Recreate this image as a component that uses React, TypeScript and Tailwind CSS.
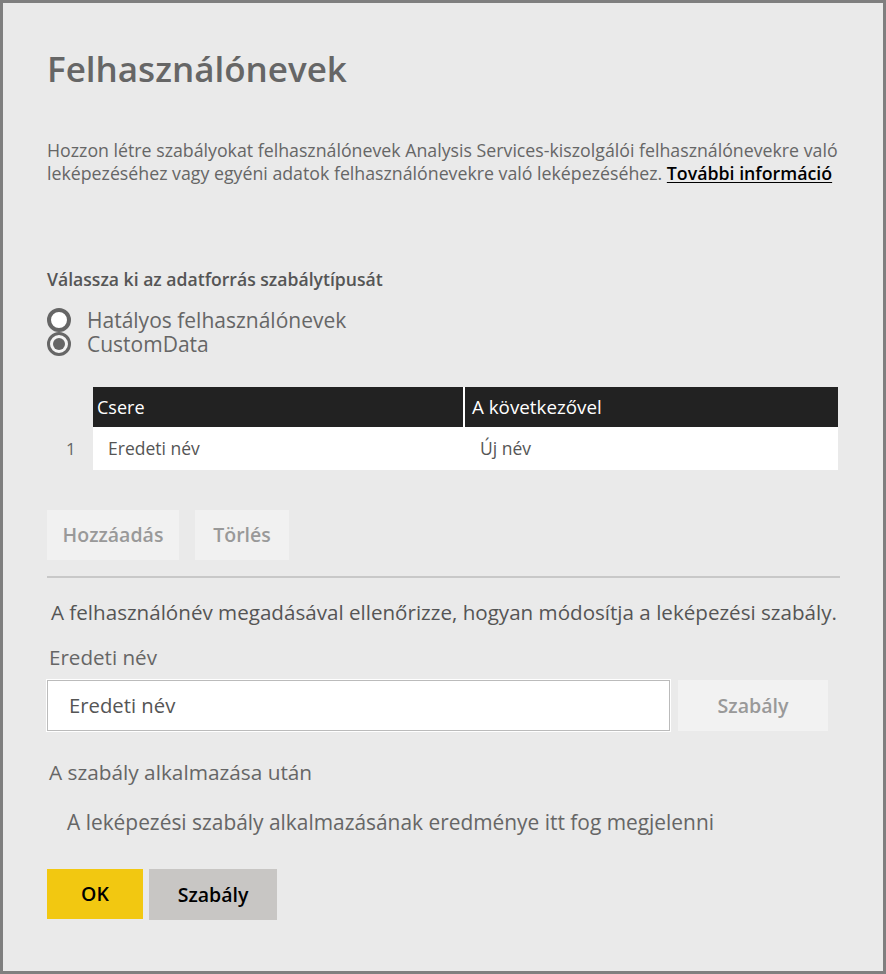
export default function App() {
  return (
    <div className="w-[886px] h-[974px] border-[3px] border-[#7f7f7f] bg-[#eaeaea] font-['Open_Sans',sans-serif] text-[#666]">
      <div className="pl-[44px] pr-[40px] pt-[42px]">
        <h1 className="text-[35px] font-semibold leading-[48px] text-[#666]">Felhasználónevek</h1>

        <p className="mt-[46px] text-[17.75px] leading-[23px] text-[#666] whitespace-nowrap">
          <span className="block">Hozzon létre szabályokat felhasználónevek Analysis Services-kiszolgálói felhasználónevekre való</span>
          <span className="block">
            leképezéséhez vagy egyéni adatok felhasználónevekre való leképezéséhez.{' '}
            <a href="#" className="font-semibold text-black underline underline-offset-2">További információ</a>
          </span>
        </p>

        <div className="mt-[82px] text-[17.6px] font-semibold text-[#555] leading-[24px]">Válassza ki az adatforrás szabálytípusát</div>

        <div className="mt-[17px] flex flex-col">
          <label className="flex items-center gap-[16px] h-[24px]">
            <span className="w-[24px] h-[24px] rounded-full border-[4px] border-[#666] bg-white" />
            <span className="text-[21px] leading-[24px] text-[#666]">Hatályos felhasználónevek</span>
          </label>
          <label className="flex items-center gap-[16px] h-[24px]">
            <span className="w-[24px] h-[24px] rounded-full border-[3px] border-[#666] bg-[#f4f4f4] flex items-center justify-center">
              <span className="w-[12px] h-[12px] rounded-full bg-[#666]" />
            </span>
            <span className="text-[21px] leading-[24px] text-[#666]">CustomData</span>
          </label>
        </div>

        <div className="mt-[31px] flex">
          <div className="w-[46px] flex flex-col">
            <div className="h-[40px]" />
            <div className="h-[43px] flex items-center pl-[19px] text-[17px] text-[#666]">1</div>
          </div>
          <div className="w-[745px]">
            <div className="flex h-[40px] bg-[#222] text-white text-[18px]">
              <div className="w-[372px] flex items-center pl-[4px] border-r-2 border-white">Csere</div>
              <div className="flex-1 flex items-center pl-[7px] text-[18.8px]">A következővel</div>
            </div>
            <div className="flex h-[43px] bg-white text-[17.5px] text-[#555]">
              <div className="w-[372px] flex items-center pl-[15px]">Eredeti név</div>
              <div className="flex-1 flex items-center pl-[15px]">Új név</div>
            </div>
          </div>
        </div>

        <div className="mt-[40px] flex gap-[16px]">
          <button className="h-[50px] w-[132px] bg-[#f1f1f1] text-[19.5px] font-semibold text-[#999]">Hozzáadás</button>
          <button className="h-[50px] w-[94px] bg-[#f1f1f1] text-[19.5px] font-semibold text-[#999]">Törlés</button>
        </div>

        <div className="mt-[16px] h-[2px] bg-[#c8c8c8] w-[793px]" />

        <div className="mt-[20px] pl-[4px] text-[20.6px] leading-[28px] text-[#555]">A felhasználónév megadásával ellenőrizze, hogyan módosítja a leképezési szabály.</div>

        <div className="mt-[17px] pl-[2px] text-[20.6px] leading-[28px] text-[#666]">Eredeti név</div>

        <div className="mt-[9px] flex gap-[8px]">
          <div className="w-[623px] h-[51px] bg-white border border-[#bbb] ring-1 ring-white flex items-center pl-[21px] text-[20.3px] text-[#555]">Eredeti név</div>
          <button className="w-[150px] h-[51px] bg-[#f2f2f2] text-[19.6px] font-semibold text-[#999]">Szabály</button>
        </div>

        <div className="mt-[27px] pl-[2px] text-[20.8px] leading-[28px] text-[#666]">A szabály alkalmazása után</div>

        <div className="mt-[22px] pl-[20px] text-[20.9px] leading-[28px] text-[#666]">A leképezési szabály alkalmazásának eredménye itt fog megjelenni</div>

        <div className="mt-[33px] flex gap-[6px]">
          <button className="w-[96px] h-[50px] bg-[#f2c811] text-[19.5px] font-semibold text-black">OK</button>
          <button className="w-[128px] h-[51px] bg-[#c8c6c4] text-[19.5px] font-semibold text-black">Szabály</button>
        </div>
      </div>
    </div>
  );
}
